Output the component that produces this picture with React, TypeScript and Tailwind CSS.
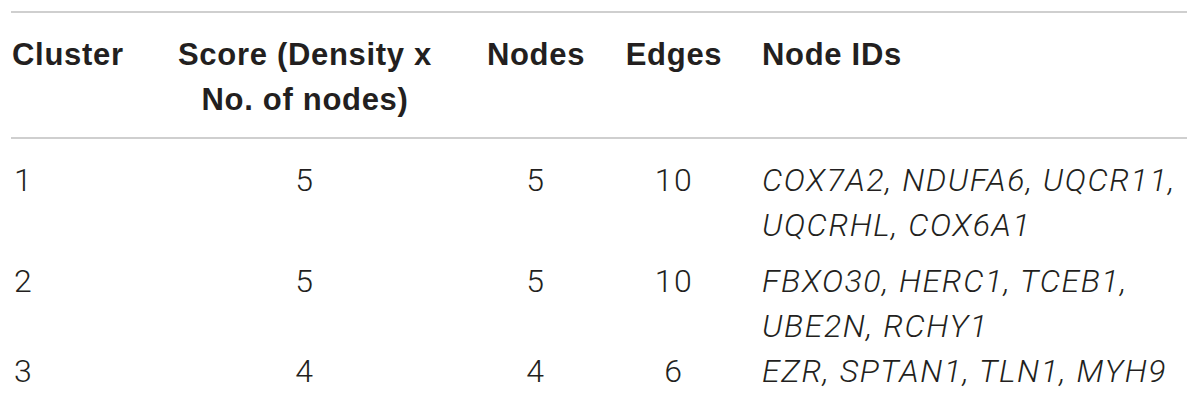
const rows = [
  { cluster: "1", score: "5", nodes: "5", edges: "10", ids: "COX7A2, NDUFA6, UQCR11, UQCRHL, COX6A1", pad: "pt-[19px] pb-[11px]" },
  { cluster: "2", score: "5", nodes: "5", edges: "10", ids: "FBXO30, HERC1, TCEB1, UBE2N, RCHY1", pad: "" },
  { cluster: "3", score: "4", nodes: "4", edges: "6", ids: "EZR, SPTAN1, TLN1, MYH9", pad: "" },
];

const cols = "grid grid-cols-[151px_286px_176px_100px_463px]";

export default function App() {
  return (
    <div className="w-[1200px] h-[407px] bg-white px-[11px] pt-[11px] text-[#231f20] font-['Liberation_Sans',Arial,sans-serif]">
      <div className="w-[1176px]">
        <div className={`${cols} border-y-2 border-[#cfcfcf] pt-[19px] pb-[15px] text-[31px] leading-[45px] font-bold tracking-[0.7px]`}>
          <div className="pl-px">Cluster</div>
          <div className="text-center">Score (Density x No. of nodes)</div>
          <div className="text-center">Nodes</div>
          <div className="text-center">Edges</div>
          <div className="pl-[38px]">Node IDs</div>
        </div>
        {rows.map((r) => (
          <div key={r.cluster} className={`${cols} ${r.pad} text-[32px] leading-[45px] font-light tracking-[1.6px] font-['Roboto',sans-serif]`}>
            <div className="pl-[3px]">{r.cluster}</div>
            <div className="text-center">{r.score}</div>
            <div className="text-center">{r.nodes}</div>
            <div className="text-center">{r.edges}</div>
            <div className="pl-[38px] italic">{r.ids}</div>
          </div>
        ))}
      </div>
    </div>
  );
}
